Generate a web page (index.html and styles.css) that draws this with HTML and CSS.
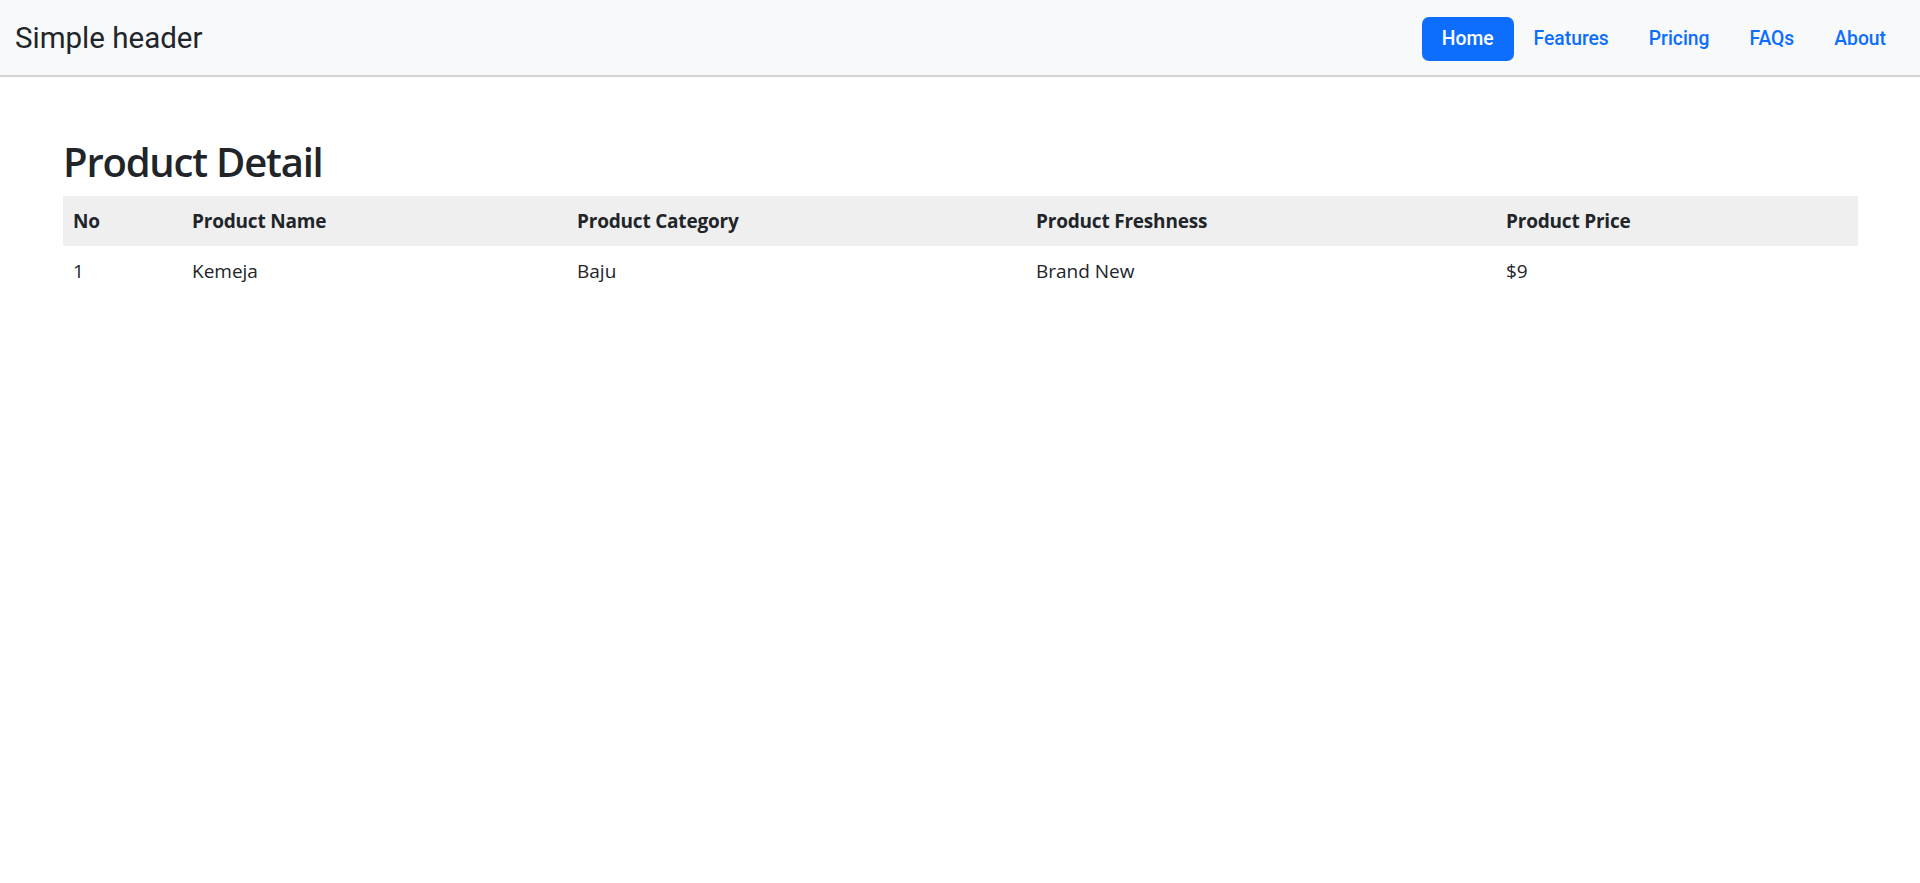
FILE: index.html
```html
<!DOCTYPE html>
<html lang="en">
<head>
<meta charset="utf-8">
<title>Product Detail</title>
<link rel="stylesheet" href="styles.css">
</head>
<body>
<header class="site-header">
  <a class="brand" href="#">Simple header</a>
  <nav class="nav">
    <a class="nav-link active" href="#">Home</a>
    <a class="nav-link" href="#">Features</a>
    <a class="nav-link" href="#">Pricing</a>
    <a class="nav-link" href="#">FAQs</a>
    <a class="nav-link" href="#">About</a>
  </nav>
</header>
<main class="content">
  <h2 class="title">Product Detail</h2>
  <table class="products">
    <colgroup>
      <col class="c-no">
      <col class="c-name">
      <col class="c-cat">
      <col class="c-fresh">
      <col class="c-price">
    </colgroup>
    <thead>
      <tr>
        <th>No</th>
        <th>Product Name</th>
        <th>Product Category</th>
        <th>Product Freshness</th>
        <th>Product Price</th>
      </tr>
    </thead>
    <tbody>
      <tr>
        <td>1</td>
        <td>Kemeja</td>
        <td>Baju</td>
        <td>Brand New</td>
        <td>$9</td>
      </tr>
    </tbody>
  </table>
</main>
</body>
</html>
```
FILE: styles.css
```css
* { box-sizing: border-box; }
html, body { margin: 0; padding: 0; background: #fff; }
body {
  font-family: "Open Sans", "Noto Sans", sans-serif;
  color: #212529;
  font-size: 20px;
  line-height: 1.5;
}
.site-header {
  display: flex;
  align-items: center;
  justify-content: space-between;
  height: 77px;
  padding: 2px 14px 0 15px;
  background: #f8f9fa;
  border-bottom: 2px solid #d3d4d5;
}
.brand {
  font-family: Roboto, "Liberation Sans", sans-serif;
  font-size: 29.5px;
  color: #212529;
  text-decoration: none;
  line-height: 1.2;
}
.nav { display: flex; align-items: center; }
.nav-link {
  font-family: Roboto, "Liberation Sans", sans-serif;
  font-size: 19.3px;
  font-weight: 500;
  line-height: 24px;
  padding: 10px 20px;
  color: #0d6efd;
  text-decoration: none;
  border-radius: 7px;
}
.nav-link.active {
  background: #0d6efd;
  color: #fff;
}
.content { padding: 61px 62px 0 63px; }
.title {
  margin: 0 0 10px;
  font-size: 40px;
  font-weight: 600;
  line-height: 48px;
  letter-spacing: -1.2px;
}
.products {
  width: 100%;
  border-collapse: collapse;
  table-layout: fixed;
}
.c-no { width: 119px; }
.c-name { width: 385px; }
.c-cat { width: 459px; }
.c-fresh { width: 470px; }
.c-price { width: auto; }
.products th, .products td {
  text-align: left;
  padding: 10px;
  line-height: 30px;
  font-size: 19px;
}
.products th { font-weight: 700; letter-spacing: -0.2px; }
.products thead tr { background: #efefef; }
```
